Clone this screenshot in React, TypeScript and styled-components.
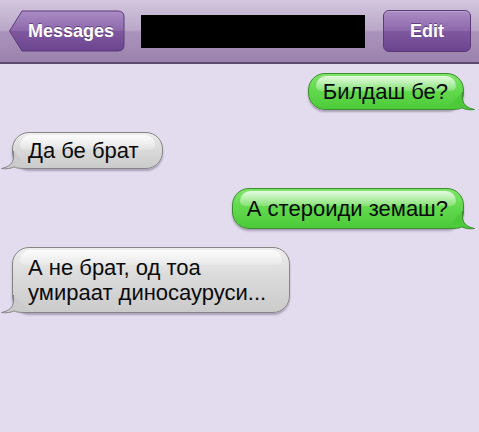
import styled, { createGlobalStyle } from 'styled-components'

const GlobalStyle = createGlobalStyle`
  html, body {
    margin: 0;
    padding: 0;
    background: #e3dcee;
  }
  body {
    font-family: "Liberation Sans", Arial, sans-serif;
  }
`

interface Msg {
  text: string[]
  sent: boolean
  top: number
  py: number
}

const messages: Msg[] = [
  { text: ['Билдаш бе?'], sent: true, top: 9, py: 5 },
  { text: ['Да бе брат'], sent: false, top: 22, py: 5 },
  { text: ['А стероиди земаш?'], sent: true, top: 19, py: 7 },
  { text: ['А не брат, од тоа', 'умираат диносауруси...'], sent: false, top: 18, py: 7 },
]

function BackShape() {
  return (
    <ShapeSvg viewBox="0 0 117 42" preserveAspectRatio="none">
      <defs>
        <linearGradient id="btnGrad" x1="0" y1="0" x2="0" y2="1">
          <stop offset="0" stopColor="#ab8dc4" />
          <stop offset="0.5" stopColor="#8c67ab" />
          <stop offset="0.5" stopColor="#7f599f" />
          <stop offset="1" stopColor="#6b4490" />
        </linearGradient>
      </defs>
      <path
        d="M1.5,21 L14,1 L110,1 Q116,1 116,7 L116,35 Q116,41 110,41 L14,41 Z"
        fill="url(#btnGrad)"
        stroke="#5a3b78"
        strokeWidth="1"
      />
    </ShapeSvg>
  )
}

function Tail({ sent }: { sent: boolean }) {
  const fill = sent ? '#4cca39' : '#cbcbcb'
  const stroke = sent ? '#3b8d2d' : '#858585'
  return (
    <TailSvg $sent={sent} viewBox="0 0 30 19">
      <path
        d="M16.5,0 L16.5,6 C16.5,12 21,16 28.5,17.5 C23,18.3 19,17.4 16,15.8 C13,17.5 9,17.5 0,17.5"
        fill={fill}
        stroke={stroke}
        strokeWidth="1"
      />
    </TailSvg>
  )
}

export default function App() {
  return (
    <Page>
      <GlobalStyle />
      <NavBar>
        <BackButton>
          <BackShape />
          <BackLabel>Messages</BackLabel>
        </BackButton>
        <TitleBlock />
        <EditButton>Edit</EditButton>
      </NavBar>

      <Thread>
        {messages.map((m, i) => (
          <Row key={i} $sent={m.sent} $top={m.top}>
            <Bubble $sent={m.sent} $py={m.py}>
              {m.text.map((line, j) => (
                <Line key={j}>{line}</Line>
              ))}
              <Tail sent={m.sent} />
            </Bubble>
          </Row>
        ))}
      </Thread>
    </Page>
  )
}

const Page = styled.div`
  width: 479px;
  height: 432px;
  overflow: hidden;
  background: #e3dcee;
`

const NavBar = styled.header`
  height: 64px;
  display: flex;
  align-items: center;
  padding: 0 8px;
  box-sizing: border-box;
  background: linear-gradient(#d3c6dd 0%, #bba8c9 48%, #ab94bc 52%, #9b82ad 100%);
  border-bottom: 2px solid #5c4a6c;
`

const BackButton = styled.div`
  position: relative;
  flex: none;
  width: 117px;
  height: 42px;
  display: flex;
  align-items: center;
  justify-content: center;
  padding-left: 9px;
  box-sizing: border-box;
`

const ShapeSvg = styled.svg`
  position: absolute;
  inset: 0;
  width: 100%;
  height: 100%;
`

const BackLabel = styled.span`
  position: relative;
  color: #fff;
  font-weight: 700;
  font-size: 18px;
  text-shadow: 0 -1px 0 rgba(60, 30, 90, 0.6);
`

const TitleBlock = styled.div`
  flex: none;
  width: 224px;
  height: 33px;
  margin-left: 16px;
  background: #000;
`

const EditButton = styled.div`
  flex: none;
  margin-left: 18px;
  width: 88px;
  height: 42px;
  box-sizing: border-box;
  border: 1px solid #5a3b78;
  border-radius: 6px;
  background: linear-gradient(#ab8dc4 0%, #8c67ab 50%, #7f599f 50%, #6b4490 100%);
  box-shadow: inset 0 1px 0 rgba(255, 255, 255, 0.2);
  display: flex;
  align-items: center;
  justify-content: center;
  color: #fff;
  font-weight: 700;
  font-size: 18px;
  text-shadow: 0 -1px 0 rgba(60, 30, 90, 0.6);
`

const Thread = styled.main`
  display: flex;
  flex-direction: column;
  padding: 0 15px 0 12px;
`

const Row = styled.div<{ $sent: boolean; $top: number }>`
  display: flex;
  justify-content: ${(p) => (p.$sent ? 'flex-end' : 'flex-start')};
  margin-top: ${(p) => p.$top}px;
`

const Bubble = styled.div<{ $sent: boolean; $py: number }>`
  position: relative;
  padding: ${(p) => (p.$sent ? `${p.$py}px 15px ${p.$py}px 14px` : `${p.$py}px 23px ${p.$py}px 15px`)};
  border-radius: 17px;
  border: 1px solid ${(p) => (p.$sent ? '#3b8d2d' : '#858585')};
  background: ${(p) =>
    p.$sent
      ? 'linear-gradient(#7fe56a 0%, #63da4e 45%, #4cca39 100%)'
      : 'linear-gradient(#eeeeee 0%, #dadada 45%, #cbcbcb 100%)'};
  box-shadow: 0 2px 2px rgba(60, 50, 80, 0.35);
  color: #0a0a0a;
  font-size: 22px;
  line-height: 25px;

  &::before {
    content: '';
    position: absolute;
    top: 2px;
    left: 7px;
    right: 7px;
    height: 42%;
    max-height: 15px;
    border-radius: 12px 12px 6px 6px;
    background: linear-gradient(rgba(255, 255, 255, 0.8), rgba(255, 255, 255, 0.2));
  }
`

const Line = styled.div`
  position: relative;
  white-space: nowrap;
`

const TailSvg = styled.svg<{ $sent: boolean }>`
  position: absolute;
  bottom: -2px;
  width: 30px;
  height: 19px;
  overflow: visible;
  ${(p) => (p.$sent ? 'right: -13px;' : 'left: -13px; transform: scaleX(-1);')}
`
